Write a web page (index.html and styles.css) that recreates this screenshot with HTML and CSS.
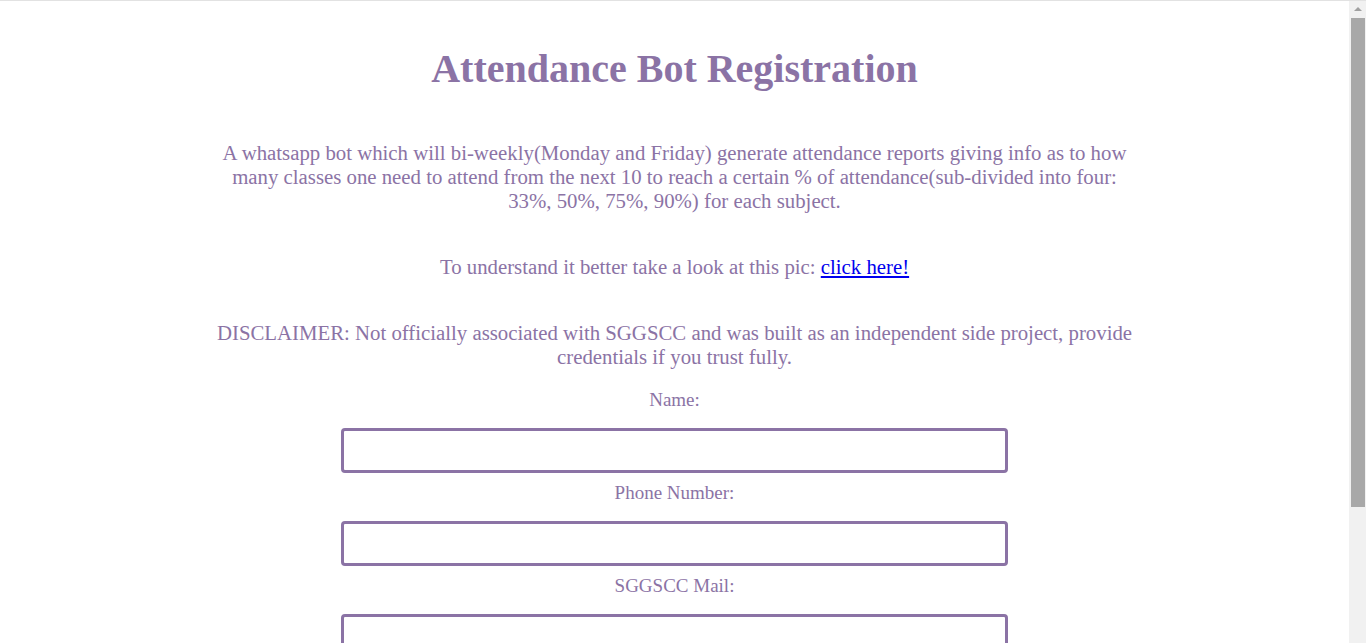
FILE: index.html
```html
<!DOCTYPE html>
<html lang="en">
<head>
<meta charset="utf-8">
<title>Attendance Bot Registration</title>
<link rel="stylesheet" href="styles.css">
</head>
<body>
<main class="page">
  <h1 class="title">Attendance Bot Registration</h1>
  <p class="intro">A whatsapp bot which will bi-weekly(Monday and Friday) generate attendance reports giving info as to how many classes one need to attend from the next 10 to reach a certain % of attendance(sub-divided into four: 33%, 50%, 75%, 90%) for each subject.</p>
  <p class="intro">To understand it better take a look at this pic: <a href="#" class="link">click here!</a></p>
  <p class="intro intro-last">DISCLAIMER: Not officially associated with SGGSCC and was built as an independent side project, provide credentials if you trust fully.</p>
  <form class="form">
    <label class="label" for="name">Name:</label>
    <input class="field" id="name" type="text">
    <label class="label" for="phone">Phone Number:</label>
    <input class="field" id="phone" type="text">
    <label class="label" for="mail">SGGSCC Mail:</label>
    <input class="field" id="mail" type="text">
    <label class="label" for="pass">Password:</label>
    <input class="field" id="pass" type="password">
  </form>
</main>
<div class="scrollbar" aria-hidden="true">
  <div class="scroll-arrow"></div>
  <div class="scroll-thumb"></div>
</div>
</body>
</html>
```
FILE: styles.css
```css
html {
  border-top: 1px solid #e2e2e2;
}
body {
  margin: 8px 25px 8px 8px;
  font-family: "Liberation Serif", "Times New Roman", serif;
  color: #8b73a5;
  background: #ffffff;
}
.page {
  display: flex;
  flex-direction: column;
  align-items: center;
}
.title {
  font-size: 40px;
  line-height: 46px;
  font-weight: bold;
  margin: 37px 0 49px;
}
.intro {
  width: 70%;
  text-align: center;
  font-size: 20.8px;
  line-height: 24px;
  margin: 0 0 42px;
}
.intro-last {
  margin-bottom: 20px;
}
.link {
  color: #0000ee;
}
.form {
  width: 100%;
  display: flex;
  flex-direction: column;
  align-items: center;
}
.label {
  font-size: 19px;
  line-height: 22px;
  margin: 0 0 17px;
}
.field {
  width: 50%;
  height: 45px;
  box-sizing: border-box;
  border: 3px solid #8b73a5;
  border-radius: 4px;
  margin: 0 0 9px;
  font-size: 18px;
}
.scrollbar {
  position: fixed;
  top: 1px;
  right: 0;
  bottom: 0;
  width: 17px;
  background: #f1f1f1;
  display: flex;
  flex-direction: column;
  align-items: center;
}
.scroll-arrow {
  flex: none;
  margin-top: 6px;
  width: 0;
  height: 0;
  border-left: 4px solid transparent;
  border-right: 4px solid transparent;
  border-bottom: 4px solid #a0a0a0;
}
.scroll-thumb {
  flex: none;
  margin-top: 7px;
  width: 14px;
  height: 489px;
  background: #a8a8a8;
}
```
